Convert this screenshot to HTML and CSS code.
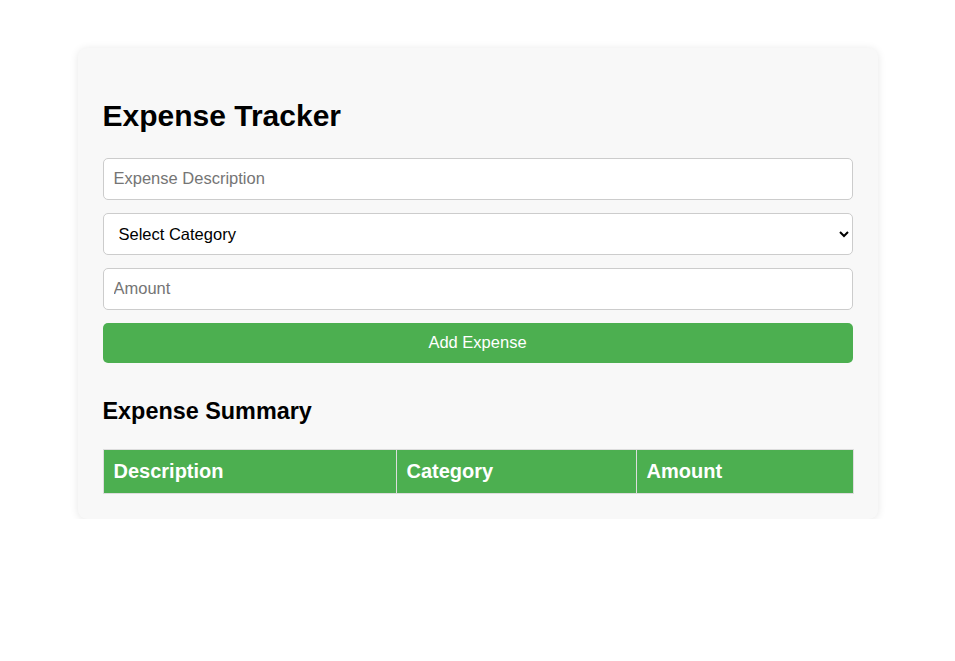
FILE: index.html
```html
<!DOCTYPE html>
<html lang="en">
<head>
<meta charset="utf-8">
<title>Expense Tracker</title>
<link rel="stylesheet" href="styles.css">
</head>
<body>
<div class="container">
  <h1 class="title">Expense Tracker</h1>
  <form class="form">
    <input class="field" type="text" placeholder="Expense Description">
    <select class="field select">
      <option>Select Category</option>
      <option>Food</option>
      <option>Transport</option>
      <option>Entertainment</option>
    </select>
    <input class="field" type="number" placeholder="Amount">
    <button class="btn" type="button">Add Expense</button>
  </form>
  <h2 class="subtitle">Expense Summary</h2>
  <table class="summary">
    <colgroup>
      <col class="col-desc">
      <col class="col-cat">
      <col class="col-amt">
    </colgroup>
    <thead>
      <tr>
        <th>Description</th>
        <th>Category</th>
        <th>Amount</th>
      </tr>
    </thead>
    <tbody></tbody>
  </table>
</div>
</body>
</html>
```

FILE: styles.css
```css
* { box-sizing: border-box; }

body {
  margin: 0;
  background: #ffffff;
  font-family: "Liberation Sans", Arial, sans-serif;
  color: #000;
}

.container {
  width: 800px;
  margin: 48px auto 0;
  padding: 25px 25px 25px;
  background: #f8f8f8;
  border-radius: 9px;
  box-shadow: 0 1px 8px rgba(0, 0, 0, 0.1);
}

.title {
  margin: 26px 0 25px;
  font-size: 30px;
  line-height: 34px;
  font-weight: bold;
}

.form {
  display: flex;
  flex-direction: column;
  gap: 13px;
}

.field {
  display: block;
  width: 100%;
  height: 42px;
  padding: 0 10px 2px;
  font-family: "Liberation Sans", Arial, sans-serif;
  font-size: 16.5px;
  color: #000;
  background: #fff;
  border: 1px solid #ccc;
  border-radius: 5px;
  outline: none;
}

.field::placeholder { color: #757575; }

.select {
  padding: 0 6px 0 11px;
}

.btn {
  display: block;
  width: 100%;
  height: 40px;
  padding: 0 0 2px;
  border: none;
  border-radius: 5px;
  background: #4caf50;
  color: #fff;
  font-family: "Liberation Sans", Arial, sans-serif;
  font-size: 16.5px;
  cursor: pointer;
}

.subtitle {
  margin: 35px 0 25px;
  font-size: 23.4px;
  line-height: 26px;
  font-weight: bold;
}

.summary {
  width: 100%;
  border-collapse: collapse;
  table-layout: fixed;
}

.col-desc { width: 293px; }
.col-cat { width: 240px; }
.col-amt { width: 217px; }

.summary th {
  background: #4caf50;
  color: #fff;
  text-align: left;
  padding: 10px 10px 11px;
  font-size: 20px;
  line-height: 22px;
  font-weight: bold;
  border: 1px solid #ddd;
}
```
